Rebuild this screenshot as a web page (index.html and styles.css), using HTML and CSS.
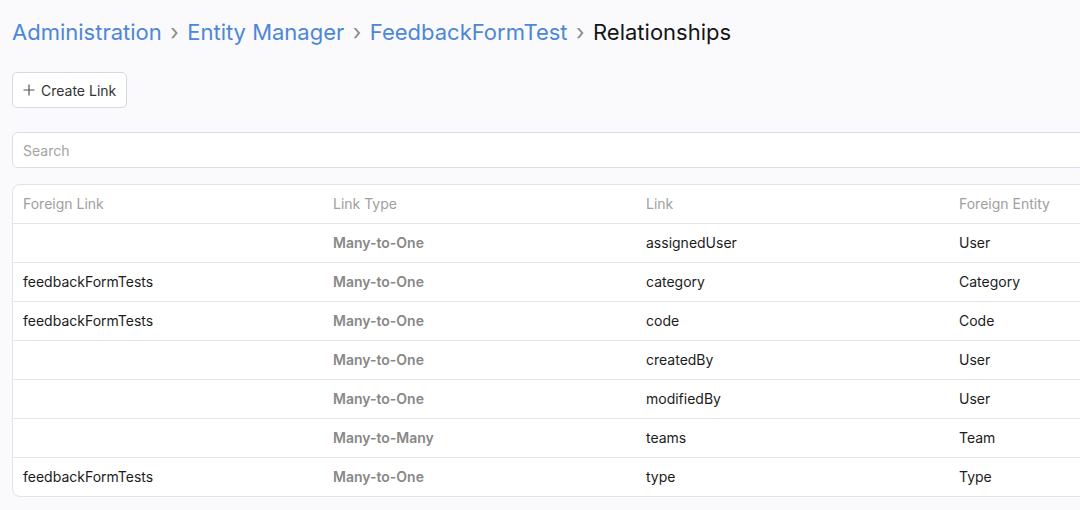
FILE: index.html
```html
<!DOCTYPE html>
<html>
<head>
<meta charset="utf-8">
<link rel="stylesheet" href="styles.css">
</head>
<body>
<div class="page">
  <div class="breadcrumb">
    <a class="crumb">Administration</a><span class="sep">›</span>
    <a class="crumb">Entity Manager</a><span class="sep">›</span>
    <a class="crumb">FeedbackFormTest</a><span class="sep">›</span>
    <span class="current">Relationships</span>
  </div>
  <div class="actions">
    <button class="btn"><svg class="plus" width="12" height="12" viewBox="0 0 12 12"><path d="M6 0.5V11.5M0.5 6H11.5" stroke="#555" stroke-width="1.2" fill="none"/></svg><span>Create Link</span></button>
  </div>
  <div class="search"><input type="text" placeholder="Search"></div>
  <div class="panel">
    <table class="grid">
      <colgroup><col class="c1"><col class="c2"><col class="c3"><col class="c4"></colgroup>
      <thead>
        <tr><th>Foreign Link</th><th>Link Type</th><th>Link</th><th>Foreign Entity</th></tr>
      </thead>
      <tbody>
        <tr><td></td><td class="type">Many-to-One</td><td>assignedUser</td><td>User</td></tr>
        <tr><td>feedbackFormTests</td><td class="type">Many-to-One</td><td>category</td><td>Category</td></tr>
        <tr><td>feedbackFormTests</td><td class="type">Many-to-One</td><td>code</td><td>Code</td></tr>
        <tr><td></td><td class="type">Many-to-One</td><td>createdBy</td><td>User</td></tr>
        <tr><td></td><td class="type">Many-to-One</td><td>modifiedBy</td><td>User</td></tr>
        <tr><td></td><td class="type">Many-to-Many</td><td>teams</td><td>Team</td></tr>
        <tr><td>feedbackFormTests</td><td class="type">Many-to-One</td><td>type</td><td>Type</td></tr>
      </tbody>
    </table>
  </div>
</div>
</body>
</html>
```
FILE: styles.css
```css
html, body {
  margin: 0;
  padding: 0;
  background: #fafafc;
  overflow: hidden;
  font-family: Inter, "Liberation Sans", sans-serif;
  color: #1c1c1c;
}
.page {
  width: 1300px;
  padding: 0 0 0 12px;
}
.breadcrumb {
  display: flex;
  align-items: baseline;
  padding-top: 17px;
  height: 34px;
  font-size: 22px;
  line-height: 30px;
}
.crumb {
  color: #4d87d6;
  text-decoration: none;
}
.sep {
  color: #8a8a8a;
  margin: 0 8.5px;
}
.current {
  color: #151515;
}
.actions {
  margin-top: 21px;
  display: flex;
}
.btn {
  display: flex;
  align-items: center;
  gap: 6px;
  height: 36px;
  padding: 0 10px 0 10px;
  border: 1px solid #d5d6e6;
  border-radius: 5px;
  background: #ffffff;
  font-family: inherit;
  font-size: 14px;
  color: #333;
}
.search {
  margin-top: 24px;
}
.search input {
  box-sizing: border-box;
  width: 1280px;
  height: 36px;
  border: 1px solid #dcdcee;
  border-radius: 6px;
  background: #fff;
  padding: 0 10px;
  font-family: inherit;
  font-size: 14px;
  outline: none;
}
.search input::placeholder {
  color: #a3a3a3;
}
.panel {
  margin-top: 16px;
  width: 1280px;
  border: 1px solid #e2e2ee;
  border-radius: 8px;
  background: #fff;
  overflow: hidden;
}
.grid {
  border-collapse: collapse;
  width: 100%;
  table-layout: fixed;
  font-size: 14px;
}
.c1 { width: 310px; }
.c2 { width: 313px; }
.c3 { width: 313px; }
.grid th {
  text-align: left;
  font-weight: 400;
  color: #a0a0a0;
  height: 37px;
  padding: 0 10px 1px;
}
.grid td {
  height: 37px;
  padding: 0 10px 1px;
  border-top: 1px solid #e4e4ef;
  color: #1c1c1c;
}
.grid td.type {
  color: #888;
  font-weight: 600;
}
```
